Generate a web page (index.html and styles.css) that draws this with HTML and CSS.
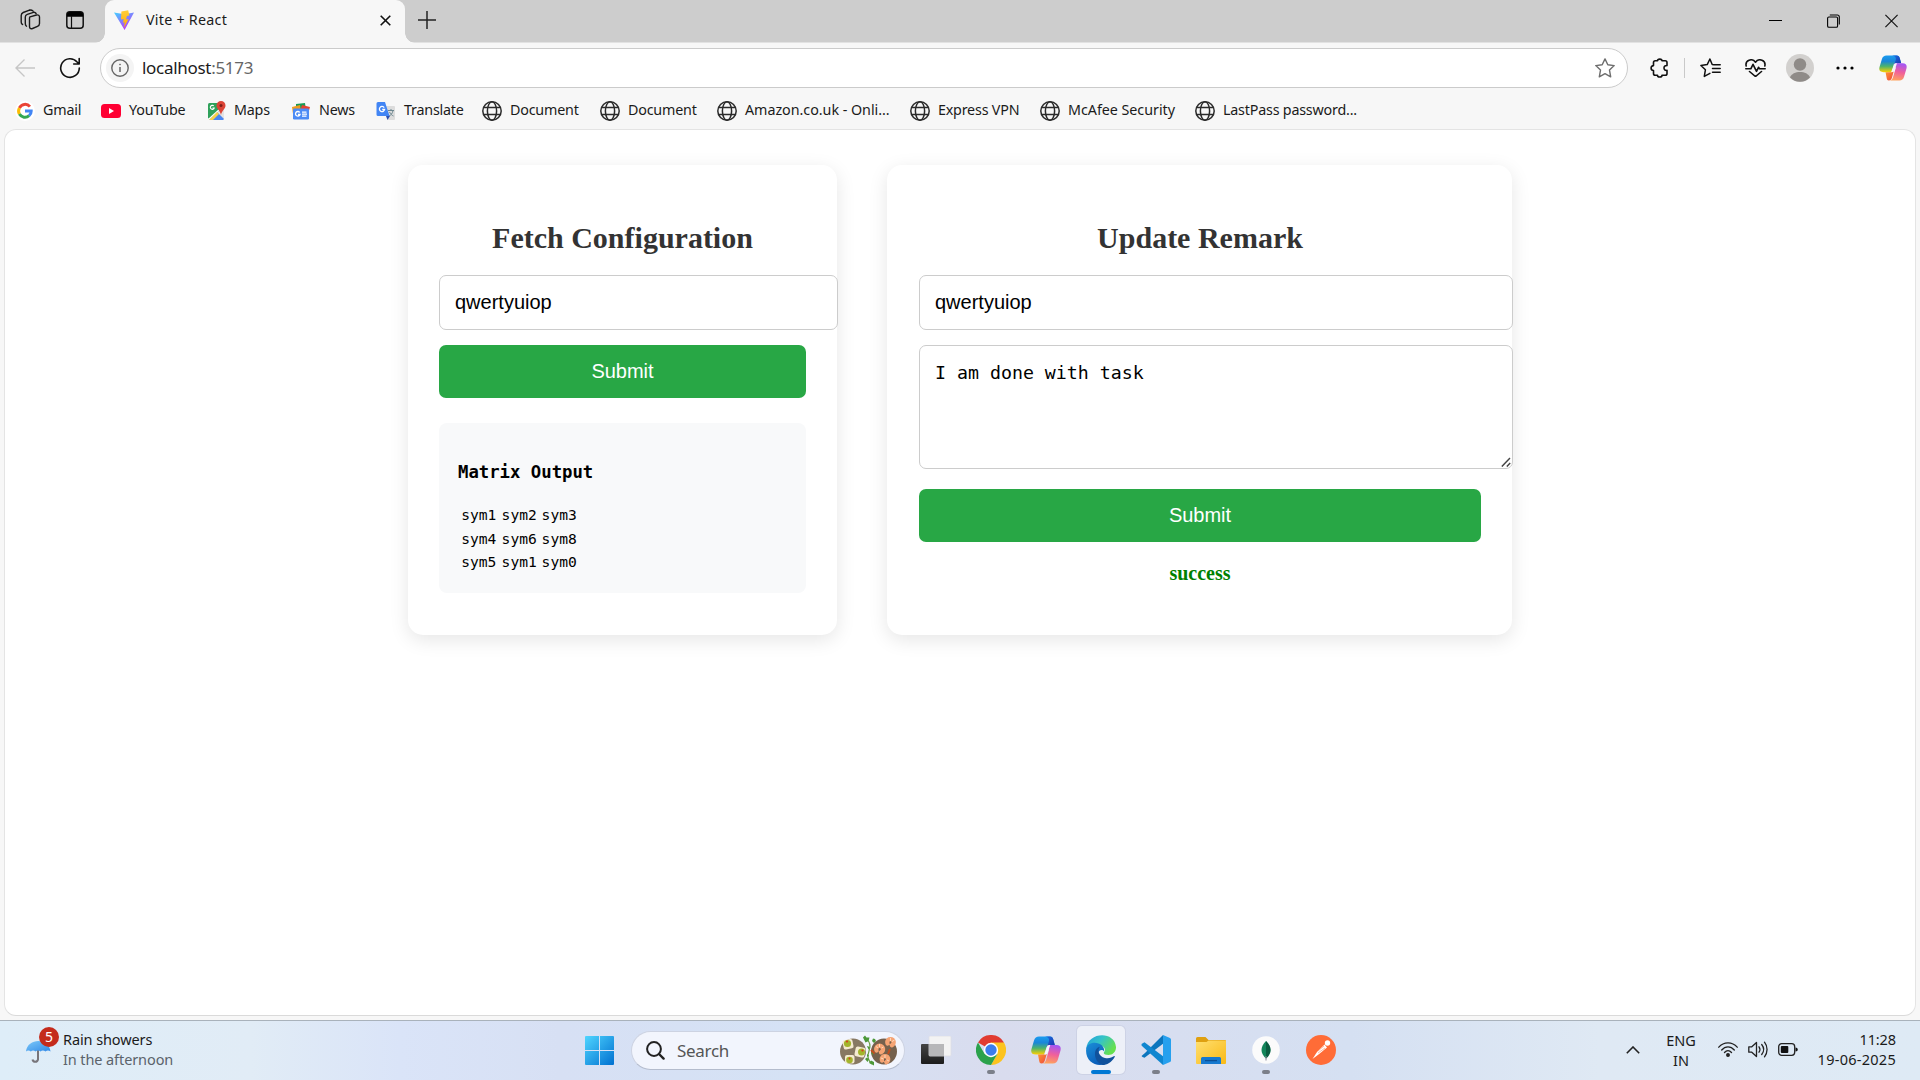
FILE: index.html
```html
<!DOCTYPE html>
<html lang="en">
<head>
<meta charset="utf-8">
<title>Vite + React</title>
<link rel="stylesheet" href="styles.css">
</head>
<body>
<svg width="0" height="0" class="defs" aria-hidden="true">
  <defs>
    <linearGradient id="viteA" x1="0" y1="0" x2="0.6" y2="1"><stop offset="0" stop-color="#41d1ff"/><stop offset="1" stop-color="#bd34fe"/></linearGradient>
    <linearGradient id="viteB" x1="0" y1="0" x2="0" y2="1"><stop offset="0" stop-color="#ffcf3a"/><stop offset="1" stop-color="#ffa800"/></linearGradient>
    <linearGradient id="copA" x1="0" y1="0" x2="0" y2="1"><stop offset="0" stop-color="#1b9cf0"/><stop offset=".35" stop-color="#1a86d8"/><stop offset=".65" stop-color="#4cb36c"/><stop offset="1" stop-color="#ffd000"/></linearGradient>
    <linearGradient id="copB" x1="0.6" y1="0" x2="0.4" y2="1"><stop offset="0" stop-color="#a355f5"/><stop offset=".5" stop-color="#f0609b"/><stop offset="1" stop-color="#ffa35c"/></linearGradient>
    <linearGradient id="copC" x1="0" y1="0" x2="1" y2="1"><stop offset="0" stop-color="#1a6fe0"/><stop offset="1" stop-color="#1c36b0"/></linearGradient>
    <linearGradient id="copD" x1="0" y1="0" x2="1" y2="1"><stop offset="0" stop-color="#ff9a30"/><stop offset="1" stop-color="#ee4640"/></linearGradient>
    <linearGradient id="win" x1="0" y1="0" x2="1" y2="1"><stop offset="0" stop-color="#4fd5ff"/><stop offset="1" stop-color="#0070d0"/></linearGradient>
    <linearGradient id="edgeTop" x1="0" y1="0" x2="1" y2=".5"><stop offset="0" stop-color="#219edc"/><stop offset=".5" stop-color="#35c3c8"/><stop offset="1" stop-color="#66e04e"/></linearGradient>
    <linearGradient id="edgeLeft" x1="0" y1="0" x2=".6" y2="1"><stop offset="0" stop-color="#1b8fd8"/><stop offset="1" stop-color="#0a5cb8"/></linearGradient>
    <linearGradient id="folder" x1="0" y1="0" x2="1" y2="1"><stop offset="0" stop-color="#ffdf70"/><stop offset="1" stop-color="#f9b915"/></linearGradient>
    <linearGradient id="umb" x1="0" y1="0" x2="1" y2="1"><stop offset="0" stop-color="#7cc8f8"/><stop offset="1" stop-color="#3089e8"/></linearGradient>
    <linearGradient id="dark" x1="0" y1="0" x2="0" y2="1"><stop offset="0" stop-color="#444"/><stop offset="1" stop-color="#1c1c1c"/></linearGradient>
    <symbol id="globe" viewBox="0 0 20 20"><g fill="none" stroke="#2b2b2b" stroke-width="1.500"><circle cx="10" cy="10" r="9.200"/><ellipse cx="10" cy="10" rx="4.600" ry="9.200"/><path d="M1.600 6.600h16.800M1.600 13.400h16.800"/></g></symbol>
    <symbol id="copilot" viewBox="0 0 30 28">
      <path d="M8 .5h11c2 0 2.700 1 3.300 3l1.500 5.500h-4.500c-2.500 0-3.500 1-4.300 4l-2 5.500H5c-4 0-5.500-2-4.500-5.500L3 4.500C3.800 1.800 5.500.5 8 .5z" fill="url(#copA)"/>
      <path d="M14 .5h5c2 0 2.700 1 3.300 3L23.800 9h-4.500c-1 0-2 .2-2.700.8 L18 5C18.600 2.500 17 .8 14 .5z" fill="url(#copC)"/>
      <path d="M16 9.500c.4-.4 1.800-.5 3-.5h6.500c3.500 0 4.800 2 4 5.500l-2.600 9c-.8 2.700-2.400 4-5 4H11c2 0 3.200-1 4-3.500l3-10z" fill="url(#copB)"/>
      <path d="M7 18.500h6c1.500 0 2.500-.5 3-1.500l-2 7c-.7 2.500-1.800 3.500-3.500 3.500S8.400 26.500 8 24z" fill="url(#copD)"/>
      <path d="M16.300 10c.8-1 1.600-1 3-1l-2.800 8c-.6 1.200-1.400 1.500-3 1.500z" fill="#f5f5fb"/>
    </symbol>
  </defs>
</svg>

<header class="tabstrip">
  <div class="strip-left">
    <svg class="i-work" width="22" height="22" viewBox="0 0 22 22" fill="none" stroke="#1a1a1a" stroke-width="1.400" stroke-linejoin="round" stroke-linecap="round"><path d="M11 7.800 17.500 6c1.700-.4 3 .4 3 2v6.500c0 1.500-.5 2.200-2 2.800l-5 2.200c-2 .7-3-.2-3-2V9.500c0-1 .2-1.500.5-1.700z"/><path d="M7.500 17.200C6.500 16.500 6.300 16 6.300 14.500V8c0-1.500.5-2.200 2-2.700l6.200-2"/><path d="M3.600 15.500C2.500 15 2.200 14.500 2.200 13V6.500c0-1.700.5-2.400 2-3L10.500 1.200"/><path d="M10.500 1.200c1.500-.4 2.500 0 3.500.8M14.500 3.300c1-.3 2 .3 2.600 1.200"/></svg>
    <svg class="i-pane" width="18" height="18" viewBox="0 0 18 18"><rect x=".8" y=".8" width="16.400" height="16.400" rx="3" fill="none" stroke="#111" stroke-width="1.500"/><path d="M1 5.800V3.500A2.500 2.500 0 0 1 3.500 1h11A2.500 2.500 0 0 1 17 3.500v2.300z" fill="#000"/><path d="M5.500 5v12" stroke="#111" stroke-width="1.200"/></svg>
  </div>
  <div class="tab">
    <svg width="20" height="20" viewBox="0 0 20 20"><path d="M0 2.500 10.600 20 20 2.500 10.500 4.200z" fill="url(#viteA)"/><path d="M14.200.2 7.400 1.500 7 9.600l2.700-.6-.7 3.700 1.800-.5-1 6L14.600 9l-2.500.5.8-3.500 2.400-.5z" fill="url(#viteB)"/></svg>
    <span class="tab-title">Vite + React</span>
    <svg class="tab-close" width="11" height="11" viewBox="0 0 11 11"><path d="M.7.7l9.600 9.600M10.300.7.7 10.300" stroke="#111" stroke-width="1.600"/></svg>
  </div>
  <svg class="newtab" width="18" height="18" viewBox="0 0 18 18"><path d="M9 0v18M0 9h18" stroke="#222" stroke-width="1.500"/></svg>
  <div class="winctl">
    <svg width="13" height="14" viewBox="0 0 13 14"><path d="M0 6.500h13" stroke="#000" stroke-width="1"/></svg>
    <svg width="13" height="14" viewBox="0 0 13 14" fill="none" stroke="#000" stroke-width="1.100"><rect x=".6" y="3" width="10" height="10.300" rx="1.300"/><path d="M2.800 1h7.500a2 2 0 0 1 2 2v7.600"/></svg>
    <svg width="13" height="14" viewBox="0 0 13 14"><path d="M.4.9l12.200 12.200M12.600.9.4 13.100" stroke="#111" stroke-width="1.150"/></svg>
  </div>
</header>

<nav class="toolbar">
  <svg class="i-back" width="20" height="18" viewBox="0 0 20 18" fill="none" stroke="#c6c6c6" stroke-width="1.400"><path d="M20 9H1M9.500.6 1 9l8.500 8.400"/></svg>
  <svg class="i-reload" width="22" height="22" viewBox="0 0 22 22" fill="none" stroke="#111" stroke-width="1.600" stroke-linecap="round" stroke-linejoin="round"><path d="M20.300 11a9.300 9.300 0 1 1-2.200-6L20 6.800M20.200 1.500v5.500h-5.500"/></svg>
  <div class="address">
    <span class="site-info"><svg width="18" height="18" viewBox="0 0 18 18" fill="none" stroke="#666"><circle cx="9" cy="9" r="8.200" stroke-width="1.400"/><path d="M9 8v5" stroke-width="1.500"/><circle cx="9" cy="5.500" r=".5" stroke-width="1"/></svg></span>
    <span class="url">localhost<span class="port">:5173</span></span>
    <svg class="i-fav" width="20" height="20" viewBox="0 0 20 20" fill="none" stroke="#6e6e6e" stroke-width="1.400" stroke-linejoin="round"><path d="M10 .9l2.800 5.900 6.400.8-4.700 4.500 1.200 6.700L10 15.600l-5.700 3.200 1.200-6.700L.8 7.600l6.400-.8z"/></svg>
  </div>
  <svg class="i-ext" width="19" height="20" viewBox="0 0 19 20" fill="none" stroke="#111" stroke-width="1.600" stroke-linejoin="round"><path d="M7.500 2.800C7.500.5 12 .5 12 2.800h3.200c1.200 0 1.800.6 1.800 1.800v3c-4-.8-4 5.600 0 4.800v3c0 1.200-.6 1.800-1.800 1.800H12c0 2.400-4.500 2.400-4.500 0H5.300c-1.200 0-1.800-.6-1.800-1.800V12.500C.3 12.500.3 7.600 3.500 7.600v-3c0-1.200.6-1.800 1.800-1.800z"/></svg>
  <span class="sep"></span>
  <svg class="i-favs" width="21" height="20" viewBox="0 0 21 20" fill="none" stroke="#111" stroke-width="1.500" stroke-linejoin="round" stroke-linecap="round"><path d="M14 6.800l-1.800-.3L9.900 1 7.200 6.600.9 7.500l4.500 4.300-1.100 6.600 5.600-3M13.500 6.700h6.700M12.500 10.500h7.700M12.500 14.300h7.700"/></svg>
  <svg class="i-heart" width="21" height="18" viewBox="0 0 21 18" fill="none" stroke="#111" stroke-width="1.600" stroke-linejoin="round" stroke-linecap="round"><path d="M1.200 7C-.2 1.500 7-1.500 10.500 3.200 14-1.500 21.200 1.500 19.800 7M4.500 12.500l6 5 6-5M.8 9.800h5L8 5.300l3.500 7 2-4 1 1.500h5.700"/></svg>
  <svg class="i-user" width="28" height="28" viewBox="0 0 28 28"><circle cx="14" cy="14" r="14" fill="#d2d0ce"/><circle cx="14" cy="10.500" r="6.200" fill="#8f8b88"/><path d="M4 23.500c2.500-7.300 17.500-7.300 20 0a14 14 0 0 1-20 0z" fill="#8f8b88"/></svg>
  <svg class="i-more" width="18" height="4" viewBox="0 0 18 4"><circle cx="2" cy="2" r="1.600"/><circle cx="9" cy="2" r="1.600"/><circle cx="16" cy="2" r="1.600"/></svg>
  <svg class="i-cop" width="28" height="26"><use href="#copilot"/></svg>
</nav>

<nav class="bookmarks">
  <a><svg width="20" height="20" viewBox="0 0 20 20"><circle cx="10" cy="10" r="10" fill="#fff"/><g fill="none" stroke-width="3"><path d="M14.900 5.600A6.300 6.300 0 0 0 4.400 7" stroke="#ea4335"/><path d="M4.400 7a6.300 6.300 0 0 0 0 6.100" stroke="#fbbc05"/><path d="M4.400 13.100a6.300 6.300 0 0 0 9.700 1.600" stroke="#34a853"/><path d="M14.100 14.700A6 6 0 0 0 16.200 10H10" stroke="#4285f4"/></g></svg><span>Gmail</span></a>
  <a><svg width="20" height="20" viewBox="0 0 20 20"><rect y="3" width="20" height="14" rx="3.500" fill="#ff0033"/><path d="M8 7v6l5-3z" fill="#fff"/></svg><span>YouTube</span></a>
  <a><svg width="20" height="20" viewBox="0 0 20 20"><rect x="2" y="2" width="16" height="17" rx="1.500" fill="#e4e4e4"/><path d="M2 3.500A1.500 1.500 0 0 1 3.500 2H13l2 6L4 18.500 2 17z" fill="#2fa15a"/><path d="M11 11l7 7-1 1H3z" fill="#4a86f0"/><path d="M13.500 8.500 2.500 18.500" stroke="#fff" stroke-width="1.600"/><path d="M3 19l8-8 2 2-6 6z" fill="#f7d04a"/><path d="M15 0a4.500 4.500 0 0 1 4.500 4.500C19.500 8 16 9 15 14c-1-5-4.500-6-4.500-9.500A4.500 4.500 0 0 1 15 0z" fill="#dc4436"/><circle cx="15" cy="4.500" r="1.500" fill="#7d1f19"/><path d="M7.800 5a2 2 0 1 0 .4 2H6.500" fill="none" stroke="#fff" stroke-width="1.100"/></svg><span>Maps</span></a>
  <a><svg width="20" height="20" viewBox="0 0 20 20"><path d="M5 3l9-1 1 8H5z" fill="#189b55"/><path d="M1 6l8-2 1 8-8 1z" fill="#ef9b1f"/><path d="M11 4l8 2-2 7-8-3z" fill="#e6412f"/><rect x="2" y="7.500" width="16" height="11" rx="1.300" fill="#4c8bf5"/><path d="M8.700 11.500A2.300 2.300 0 1 0 9 13.500H7M11 11.200h4.500M11 13.200h5M11 15.200h4.500" fill="none" stroke="#fff" stroke-width="1.300"/></svg><span>News</span></a>
  <a><svg width="20" height="20" viewBox="0 0 20 20"><path d="M9 5h9a1 1 0 0 1 1 1v12a1 1 0 0 1-1 1h-6z" fill="#dcdcdc"/><path d="M12 9.500h6M15 8v1.500M17 9.500c-.5 3-2 4.500-4 5.500M13.500 11c1 2 2.500 3.500 4 4" stroke="#6d8790" stroke-width="1" fill="none"/><path d="M10 15h4l-2.500 4z" fill="#2b4fb0"/><path d="M2 1h7l4.500 14H2a1.500 1.500 0 0 1-1.500-1.500v-11A1.500 1.500 0 0 1 2 1z" fill="#4285f4"/><path d="M8.200 6.600A2.600 2.600 0 1 0 8.600 8.500H6.200" fill="none" stroke="#fff" stroke-width="1.300"/></svg><span>Translate</span></a>
  <a><svg width="20" height="20"><use href="#globe"/></svg><span>Document</span></a>
  <a><svg width="20" height="20"><use href="#globe"/></svg><span>Document</span></a>
  <a><svg width="20" height="20"><use href="#globe"/></svg><span class="wide">Amazon.co.uk - Onli...</span></a>
  <a><svg width="20" height="20"><use href="#globe"/></svg><span>Express VPN</span></a>
  <a><svg width="20" height="20"><use href="#globe"/></svg><span class="wide">McAfee Security</span></a>
  <a><svg width="20" height="20"><use href="#globe"/></svg><span>LastPass password...</span></a>
</nav>

<main class="page">
  <section class="card fetch">
    <h2>Fetch Configuration</h2>
    <input class="field" type="text" value="qwertyuiop">
    <button class="submit">Submit</button>
    <div class="matrix">
      <h4>Matrix Output</h4>
      <table>
        <tr><td>sym1</td><td>sym2</td><td>sym3</td></tr>
        <tr><td>sym4</td><td>sym6</td><td>sym8</td></tr>
        <tr><td>sym5</td><td>sym1</td><td>sym0</td></tr>
      </table>
    </div>
  </section>
  <section class="card update">
    <h2>Update Remark</h2>
    <input class="field" type="text" value="qwertyuiop">
    <div class="remark">
      <textarea class="field">I am done with task</textarea>
      <svg class="grip" width="10" height="10" viewBox="0 0 10 10"><path d="M.8 9.600 9 1M5.800 9.600 9.200 6" stroke="#444" stroke-width="1.400"/></svg>
    </div>
    <button class="submit">Submit</button>
    <p class="status">success</p>
  </section>
</main>

<footer class="taskbar">
  <div class="weather">
    <div class="umbrella">
      <svg width="25" height="24" viewBox="0 0 25 24"><path d="M12 10v9.500a2.800 2.800 0 0 1-5.500 0" fill="none" stroke="#77757a" stroke-width="2"/><path d="M0 11.500C1.500-2.500 23-2.500 24.500 11.500c-1.500-1.500-3.500-1.500-5 0-1.800-1.500-3.500-1.500-5 0-1.500-1.500-3.500-1.500-5 0-1.500-1.500-3.200-1.500-4.700 0-1.500-1.500-3.300-1.500-4.800 0z" fill="url(#umb)"/></svg>
      <span class="count">5</span>
    </div>
    <div class="forecast"><span>Rain showers</span><span class="sub">In the afternoon</span></div>
  </div>
  <div class="apps">
    <div class="slot start"><svg width="29" height="29" viewBox="0 0 29 29"><path d="M1 0h13v14H0V1a1 1 0 0 1 1-1zM15 0h13a1 1 0 0 1 1 1v13H15zM0 15h14v14H1a1 1 0 0 1-1-1zM15 15h14v13a1 1 0 0 1-1 1H15z" fill="url(#win)"/></svg></div>
    <div class="search">
      <svg width="19" height="19" viewBox="0 0 19 19" fill="none" stroke="#222" stroke-linecap="round"><circle cx="8" cy="8" r="6.900" stroke-width="2"/><path d="M13 13l4.600 4.600" stroke-width="2.400"/></svg>
      <span>Search</span>
      <svg class="food" width="60" height="32" viewBox="0 0 60 32">
        <circle cx="14" cy="16.500" r="13" fill="#877862"/><circle cx="45" cy="16.500" r="13" fill="#75614d"/>
        <g fill="#f4ead0"><rect x="4" y="4.500" width="10" height="9.500" rx="2" transform="rotate(-12 9 9)"/><rect x="16" y="12" width="10" height="10" rx="2" transform="rotate(12 21 17)"/><rect x="6" y="20" width="9.500" height="8.500" rx="2"/></g>
        <g fill="#a3b52c"><circle cx="8.500" cy="8.500" r="3.600"/><circle cx="22.500" cy="17" r="3.500"/><circle cx="10.500" cy="25" r="3.300"/></g>
        <g fill="#d8401f"><circle cx="8" cy="6.500" r="1.100"/><circle cx="23.500" cy="15.500" r="1.100"/><circle cx="10.500" cy="23.400" r="1"/></g>
        <path d="M27 4q6 4 3 12t3 13" fill="none" stroke="#6d9e45" stroke-width="1.200"/>
        <g fill="#4c9838"><path d="M24 2.500l2-2 1.500 2 3 0-1 3.500-3 1.500zM33 6l1-2.500 2 .5 1 2-2 2zM26 24l2-1.500 2 2-1.500 2.500zM30 28l2-2.500 3 1.500 0 3.500zM28 11l3 1-1.500 2.500zM32 18l2-1v3zM28 19l2 1.500-2 1.500z"/></g>
        <g fill="none" stroke="#f5a474" stroke-width="4.400" stroke-linecap="round"><path d="M37.500 15.500a3.400 3.400 0 1 1 4.500 1.800M48.500 8.500a3.200 3.200 0 1 1 4.300 1.700M43 25.500a3.200 3.200 0 1 1 4.300 1.700"/></g>
        <g fill="none" stroke="#ffdcc0" stroke-width=".9"><path d="M40.500 9v3M37 11.500l2 1.500M44.500 12l-2 1M51.500 3v3M55.500 5l-2.500 1.500M46 20v3M42 23l2.500 1M50 26l-2-1"/></g>
        <path d="M32 15l3.500 3.500M51 14l-2 5" stroke="#c24e1e" stroke-width="2"/>
      </svg>
    </div>
    <div class="slot"><svg width="31" height="28" viewBox="0 0 31 28"><rect x="0" y="8" width="23" height="20" rx="1" fill="url(#dark)"/><rect x="8" y="0" width="22" height="20" rx="1" fill="#f3f3f3" stroke="#dedee4" stroke-width=".8"/><path d="M8 8h15v12H9a1 1 0 0 1-1-1z" fill="#b7b7b9"/></svg></div>
    <div class="slot run"><svg width="30" height="30" viewBox="0 0 30 30"><path d="M15 15 2 7.500A15 15 0 0 1 28 7.500z" fill="#e13b30"/><path d="M15 7.500h13A15 15 0 0 1 15 30l6.500-11.300z" fill="#fcc31e"/><path d="M2 7.500l6.500 11.200 6.500 3.500 6.500-3.500L15 30A15 15 0 0 1 2 7.500z" fill="#2ba24c"/><circle cx="15" cy="15" r="7.200" fill="#fff"/><circle cx="15" cy="15" r="5.700" fill="#3b7ded"/></svg></div>
    <div class="slot"><svg width="30" height="28"><use href="#copilot"/></svg></div>
    <div class="slot active"><svg width="30" height="30" viewBox="0 0 30 30"><path d="M.3 13.500C1.500-3 28.500-5 30 12c.2 5-3.500 8-7.500 8-3.500 0-5.500-1-4.500-2.700 2-3 .5-6.300-3.500-6.300-5 0-8 3-8.500 6z" fill="url(#edgeTop)"/><path d="M.1 15C.3 9 7 6.500 12.500 8.500c4.500 1.500 6 5 5.500 8-1-2.500-5-2-6 2-1 5 3 9.500 7 10.500-9 3.500-19.500-3-18.900-14z" fill="url(#edgeLeft)"/><path d="M9 18c.5-4 3-6 5-6.200-3 3.200-1.500 9.700 5 11.200 4 .8 7-.5 9.200-2 .5 0 .8.400.5 1C25.500 27.500 21 30 16.500 30 11.500 28 8.500 23 9 18z" fill="#11529c"/></svg></div>
    <div class="slot run"><svg width="30" height="30" viewBox="0 0 30 30"><path d="M.5 21 4 18l18-18 1 8L3.500 22.800 1.500 22z" fill="#0b75bd"/><path d="M.5 9 3.500 7.200 23 22l-1 8L.7 10.700z" fill="#0f86d0"/><path d="M22 0l7 3a2 2 0 0 1 1 1.800v20.400a2 2 0 0 1-1 1.800l-7 3z" fill="#26a0ee"/></svg></div>
    <div class="slot"><svg width="30" height="27" viewBox="0 0 30 27"><path d="M0 1.500A1.500 1.500 0 0 1 1.500 0h8l3 3H29a1 1 0 0 1 1 1v8H0z" fill="#dfa010"/><path d="M0 5h10.500l2-1.500H30V26a1 1 0 0 1-1 1H1a1 1 0 0 1-1-1z" fill="url(#folder)"/><path d="M5 27v-5.500A1.500 1.500 0 0 1 6.500 20h17a1.500 1.500 0 0 1 1.500 1.500V27z" fill="#1679cf"/><path d="M9 23.600h12" stroke="#0b4f94" stroke-width="1.300"/></svg></div>
    <div class="slot run"><svg width="28" height="28" viewBox="0 0 28 28"><circle cx="14" cy="14" r="13.800" fill="#fbfbfb"/><path d="M14 5c6 6 6 12 0 17.500C8 17 8 11 14 5z" fill="#12855a"/><path d="M14 5c6 6 6 12 0 17.500z" fill="#0a5c40"/><path d="M14 20v4.500" stroke="#889" stroke-width="1"/></svg></div>
    <div class="slot"><svg width="30" height="30" viewBox="0 0 30 30"><circle cx="15" cy="15" r="15" fill="#ff6c37"/><circle cx="21.500" cy="8" r="2.700" fill="#fff"/><path d="M18.500 9.500l2.500 3-8.500 7L6.500 24l4.500-7z" fill="#fff"/><path d="M12 16l6-5M12 18l7-5" stroke="#ff9d78" stroke-width=".7"/></svg></div>
  </div>
  <div class="tray">
    <svg class="chev" width="14" height="8" viewBox="0 0 14 8"><path d="M.8 7.200 7 1l6.200 6.200" fill="none" stroke="#222" stroke-width="1.600"/></svg>
    <div class="lang"><span>ENG</span><span>IN</span></div>
    <svg class="wifi" width="20" height="15" viewBox="0 0 20 15" fill="none" stroke="#222" stroke-width="1.300" stroke-linecap="round"><path d="M.8 5.200c5-5.800 13.400-5.800 18.400 0M3.700 8c3.600-4.200 9-4.200 12.600 0M6.500 10.500c2.200-2.400 4.800-2.400 7 0"/><circle cx="10" cy="13" r="1.300" fill="#222"/></svg>
    <svg class="vol" width="20" height="17" viewBox="0 0 20 17" fill="none" stroke="#222" stroke-width="1.300" stroke-linecap="round" stroke-linejoin="round"><path d="M.8 5.800h3L8.500 1.500v14l-4.700-4.300h-3zM11 5.800c1.200 1.700 1.200 3.700 0 5.400M13.700 3.500c2.400 3 2.400 7 0 10M16.500 1.200c3.400 4.300 3.400 10.300 0 14.600"/></svg>
    <svg class="bat" width="20" height="13" viewBox="0 0 20 13"><rect x=".7" y=".7" width="16" height="11.600" rx="3" fill="none" stroke="#222" stroke-width="1.300"/><rect x="2.800" y="3" width="7.500" height="7" rx="1" fill="#111"/><path d="M17.500 4.500c3 0 3 4 0 4z" fill="#111"/></svg>
    <div class="clock"><span>11:28</span><span class="date">19-06-2025</span></div>
  </div>
</footer>
</body>
</html>
```
FILE: styles.css
```css
* { box-sizing: border-box; }
body {
  margin: 0;
  width: 1920px;
  height: 1080px;
  overflow: hidden;
  display: flex;
  flex-direction: column;
  background: #f7f7f7;
  color: #1b1b1b;
  font: 15px/20px "Noto Sans", "Open Sans", sans-serif;
}
.defs { position: absolute; }
svg { display: block; flex: none; }
span { white-space: nowrap; }

/* tab strip */
.tabstrip {
  height: 43px;
  flex: none;
  display: flex;
  background: #cdcdcd;
  border-bottom: 1px solid #e2e2e2;
}
.strip-left {
  width: 105px;
  height: 42px;
  padding: 9px 0 0 19px;
  display: flex;
  gap: 25px;
}
.i-pane { margin-top: 2px; }
.tab {
  position: relative;
  width: 300px;
  height: 43px;
  padding: 10px 14px 0 9px;
  display: flex;
  background: #f7f7f7;
  border-radius: 9px 9px 0 0;
}
.tab::before, .tab::after {
  content: "";
  position: absolute;
  bottom: 0;
  width: 10px;
  height: 10px;
}
.tab::before { left: -10px; background: radial-gradient(circle at 0 0, transparent 9.500px, #f7f7f7 10px); }
.tab::after { right: -10px; background: radial-gradient(circle at 100% 0, transparent 9.500px, #f7f7f7 10px); }
.tab-title { margin-left: 12px; font-size: 14.300px; letter-spacing: .25px; }
.tab-close { margin: 5px 0 0 auto; }
.newtab { margin: 11px 0 0 13px; }
.winctl { margin: 14px 22px 0 auto; display: flex; gap: 45px; }

/* toolbar */
.toolbar { height: 50px; flex: none; display: flex; align-items: center; }
.i-back { margin-left: 15px; }
.i-reload { margin-left: 24px; }
.address {
  width: 1528px;
  height: 40px;
  margin-left: 19px;
  padding: 0 12px 0 5px;
  display: flex;
  align-items: center;
  background: #fff;
  border: 1px solid #cbcbcb;
  border-radius: 20px;
}
.site-info {
  width: 28px;
  height: 28px;
  display: grid;
  place-items: center;
  background: #f4f4f4;
  border-radius: 50%;
}
.url { margin-left: 8px; font-size: 17px; letter-spacing: -.3px; }
.port { color: #666; }
.i-fav { margin-left: auto; }
.i-ext { margin-left: 22px; }
.sep { width: 1px; height: 20px; margin-left: 15px; background: #c9c9c9; }
.i-favs { margin-left: 15px; }
.i-heart { margin-left: 24px; }
.i-user { margin-left: 20px; }
.i-more { margin-left: 22px; }
.i-cop { margin-left: 25px; }

/* bookmarks */
.bookmarks {
  height: 36px;
  flex: none;
  padding: 0 0 2px 15px;
  display: grid;
  grid-template-columns: 86px 105px 85px 85px 106px 118px 117px 193px 130px 155px 200px;
  align-items: center;
}
.bookmarks a { display: flex; align-items: center; gap: 8px; font-size: 14.300px; letter-spacing: -.2px; }
.bookmarks a svg { position: relative; top: 1px; }
.bookmarks .wide { letter-spacing: -.03px; }

/* web page */
.page {
  width: 1912px;
  height: 887px;
  flex: none;
  margin: 0 4px;
  padding: 35px 0 0 403px;
  display: flex;
  align-items: flex-start;
  gap: 50px;
  background: #fff;
  border: 1px solid #e4e4e4;
  border-bottom-color: #dadada;
  border-radius: 12px;
}
.card {
  height: 470px;
  padding: 55px 31px 0;
  display: flex;
  flex-direction: column;
  background: #fff;
  border-radius: 15px;
  box-shadow: 0 5px 19px rgba(0, 0, 0, .1);
}
.fetch { width: 429px; }
.update { width: 625px; padding-left: 32px; }
.card h2 {
  margin: 0 0 19px;
  font: bold 30px/36px "Liberation Serif", serif;
  color: #333;
  text-align: center;
}
.field {
  display: block;
  height: 55px;
  margin: 0;
  padding: 0 15px;
  border: 1px solid #ccc;
  border-radius: 7px;
  outline: none;
  background: #fff;
  color: #000;
  font: 20px/24px "Liberation Sans", sans-serif;
}
.fetch .field { width: 399px; }
.update .field { width: 594px; }
.submit {
  height: 53px;
  margin: 15px 0 0;
  padding: 0 0 2px;
  border: 0;
  border-radius: 7px;
  background: #28a745;
  color: #fff;
  font: 20px/24px "Liberation Sans", sans-serif;
}
.remark { position: relative; width: 594px; margin-top: 15px; }
.remark .field {
  height: 124px;
  padding: 15px;
  resize: none;
  font: 18.260px/24px "DejaVu Sans Mono", monospace;
}
.grip { position: absolute; right: 2px; bottom: 2px; }
.update .submit { margin-top: 20px; }
.status {
  margin: 20px 0 0;
  font: bold 20px/23px "Liberation Serif", serif;
  color: #008000;
  text-align: center;
}
.matrix {
  height: 170px;
  margin-top: 25px;
  padding: 37px 19px 0;
  background: #f8f9fa;
  border-radius: 8px;
  color: #000;
  font-family: "DejaVu Sans Mono", monospace;
}
.matrix h4 { margin: 0; font-size: 17.300px; line-height: 24px; }
.matrix table { margin-top: 18px; border-spacing: 2.500px; }
.matrix tr { height: 21px; }
.matrix tr:nth-child(2) { height: 22px; }
.matrix td { padding: 0 0 0 1.200px; width: 38px; font-size: 14.600px; line-height: 21px; }
.matrix td:nth-child(n+2) { padding-left: 1.600px; }

/* taskbar */
.taskbar {
  height: 60px;
  flex: none;
  margin-top: 4px;
  display: flex;
  background: linear-gradient(90deg, #deedf8 0, #e1ecf6 250px, #dae4f8 400px, #d7e0f4 560px, #d5e2f5 800px, #d9dcee 1000px, #d5e0f2 1350px, #dfe9f4 1600px, #deeaf5 100%);
  border-top: 1px solid #a9b2bb;
}
.weather { width: 575px; padding: 7px 0 0 26px; display: flex; }
.umbrella { position: relative; width: 38px; padding-top: 12px; }
.count {
  position: absolute;
  left: 13px;
  top: -1px;
  width: 20px;
  height: 20px;
  border-radius: 50%;
  background: #c42b1c;
  color: #fff;
  font-size: 14px;
  text-align: center;
}
.forecast { display: flex; flex-direction: column; padding-top: 1px; margin-left: -1px; font-size: 14.500px; letter-spacing: -.1px; }
.sub { color: #5b636b; }
.apps { display: flex; gap: 7px; padding-top: 5px; }
.slot {
  position: relative;
  width: 48px;
  height: 48px;
  display: grid;
  place-items: center;
  border-radius: 5px;
}
.start { margin-right: 1px; }
.active { background: #edf0f8; box-shadow: 0 0 0 1px rgba(190, 195, 215, .4); }
.run::after, .active::after {
  content: "";
  position: absolute;
  left: 20px;
  bottom: 0;
  width: 8px;
  height: 4px;
  border-radius: 2px;
  background: #7b7f89;
}
.active::after { left: 14px; width: 20px; background: #0078d4; }
.search {
  width: 274px;
  height: 39px;
  margin-top: 5px;
  padding: 0 5px 0 14px;
  display: flex;
  align-items: center;
  background: #f2f5fd;
  border: 1px solid #cdd3e2;
  border-bottom-color: #b4bccd;
  border-radius: 20px;
  color: #555;
  font-size: 17px;
}
.search span { margin-left: 12px; letter-spacing: -.3px; }
.food { margin-left: auto; }
.tray { margin-left: auto; width: 294px; display: flex; }
.chev { margin-top: 25px; }
.lang { width: 40px; margin: 9px 0 0 21px; display: flex; flex-direction: column; text-align: center; font-size: 14.500px; }
.wifi { margin: 21px 0 0 17px; }
.vol { margin: 20px 0 0 10px; }
.bat { margin: 22px 0 0 10px; }
.clock { margin: 8px 24px 0 auto; display: flex; flex-direction: column; text-align: right; font-size: 14.500px; letter-spacing: -.1px; }
.date { letter-spacing: .27px; }
```
